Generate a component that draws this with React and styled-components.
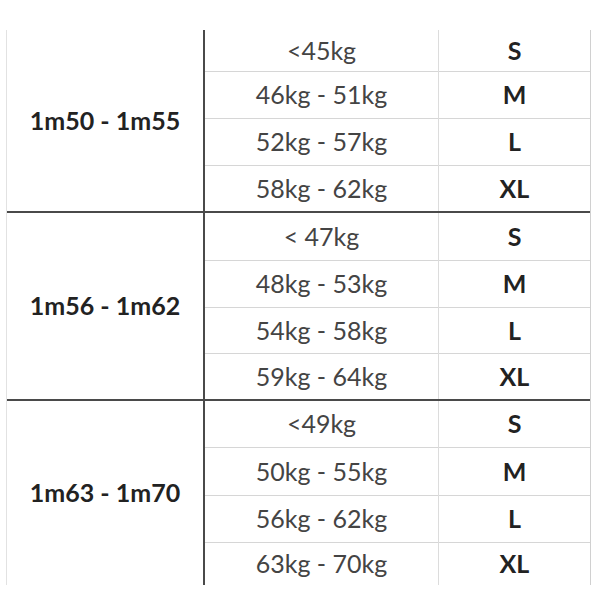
import React from "react";
import styled, { createGlobalStyle } from "styled-components";

const Global = createGlobalStyle`
  html, body { margin: 0; padding: 0; background: #ffffff; }
  body { font-family: Lato, "Liberation Sans", sans-serif; }
`;

const Page = styled.div`
  width: 600px;
  height: 600px;
  overflow: hidden;
  padding: 30px 0 0 6px;
  box-sizing: border-box;
`;

const Table = styled.div`
  width: 583px;
  border-left: 1px solid #e2e2e2;
  border-right: 1px solid #d0d0d0;
  display: flex;
  flex-direction: column;
`;

const Group = styled.div`
  display: grid;
  grid-template-columns: 196px 2px 233px 1px 1fr;
  border-bottom: ${(p) => (p.$last ? "none" : "2px solid #4a4a4a")};
`;

const Height = styled.div`
  grid-column: 1;
  grid-row: 1 / span 4;
  display: flex;
  align-items: center;
  justify-content: center;
  font-weight: 700;
  font-size: 25px;
  color: #222222;
  padding-bottom: 2px;
`;

const DarkRule = styled.div`
  grid-column: 2;
  grid-row: 1 / span 4;
  background: #4a4a4a;
`;

const LightRule = styled.div`
  grid-column: 4;
  grid-row: 1 / span 4;
  background: #dcdcdc;
`;

const Cell = styled.div`
  height: ${(p) => p.$h}px;
  display: flex;
  align-items: center;
  justify-content: center;
  font-size: 25px;
  box-sizing: border-box;
  padding-bottom: 2px;
  border-bottom: ${(p) => (p.$line ? "1px solid #d6d6d6" : "none")};
`;

const Weight = styled(Cell)`
  grid-column: 3;
  color: #444444;
  font-weight: 400;
`;

const Size = styled(Cell)`
  grid-column: 5;
  color: #222222;
  font-weight: 700;
`;

const data = [
  {
    h: "1m50 - 1m55",
    rows: [
      ["<45kg", "S"],
      ["46kg - 51kg", "M"],
      ["52kg - 57kg", "L"],
      ["58kg - 62kg", "XL"],
    ],
    heights: [42, 47, 47, 45],
  },
  {
    h: "1m56 - 1m62",
    rows: [
      ["< 47kg", "S"],
      ["48kg - 53kg", "M"],
      ["54kg - 58kg", "L"],
      ["59kg - 64kg", "XL"],
    ],
    heights: [48, 47, 46, 45],
  },
  {
    h: "1m63 - 1m70",
    rows: [
      ["<49kg", "S"],
      ["50kg - 55kg", "M"],
      ["56kg - 62kg", "L"],
      ["63kg - 70kg", "XL"],
    ],
    heights: [47, 48, 47, 42],
  },
];

export default function App() {
  return (
    <>
      <Global />
      <Page>
        <Table>
          {data.map((g, gi) => (
            <Group key={gi} $last={gi === data.length - 1}>
              <Height>{g.h}</Height>
              <DarkRule />
              <LightRule />
              {g.rows.map(([w, s], ri) => (
                <React.Fragment key={ri}>
                  <Weight $h={g.heights[ri]} $line={ri < 3} style={{ gridRow: ri + 1 }}>
                    {w}
                  </Weight>
                  <Size $h={g.heights[ri]} $line={ri < 3} style={{ gridRow: ri + 1 }}>
                    {s}
                  </Size>
                </React.Fragment>
              ))}
            </Group>
          ))}
        </Table>
      </Page>
    </>
  );
}
